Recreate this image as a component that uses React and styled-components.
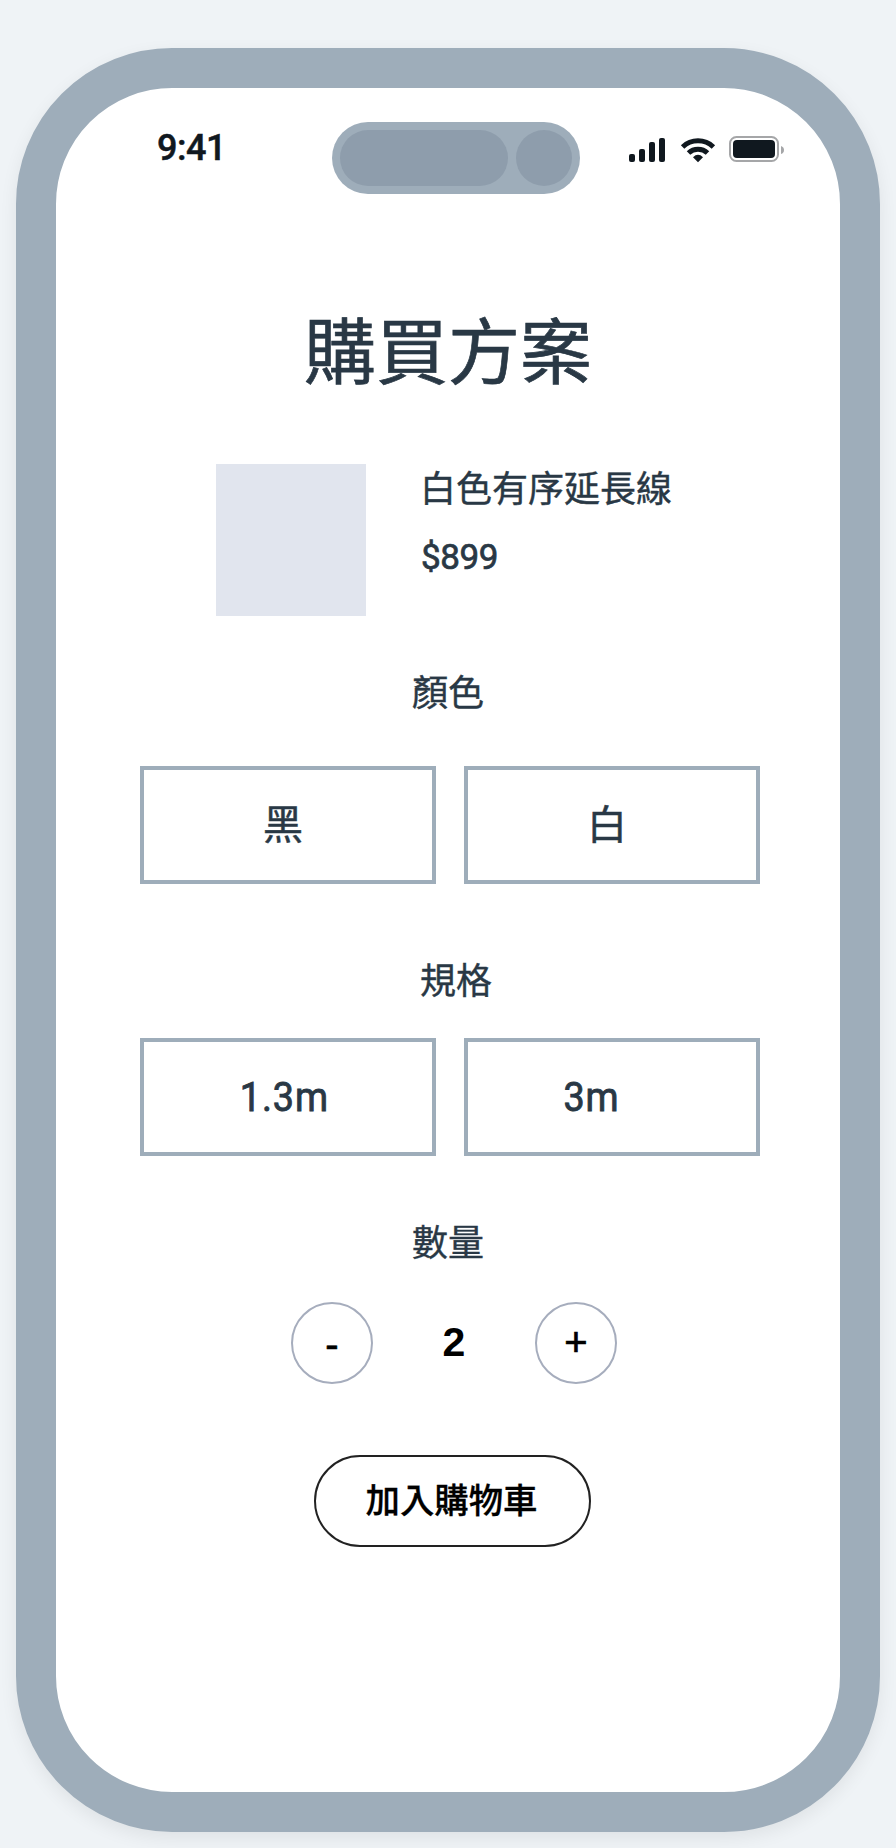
import React, { useState } from "react";
import styled, { createGlobalStyle } from "styled-components";

const GlobalStyle = createGlobalStyle`
  * { box-sizing: border-box; }
  body {
    margin: 0;
    background: #eff3f6;
    color: #293845;
    font-family: "Noto Sans CJK TC", sans-serif;
  }
  button { margin: 0; padding: 0; background: transparent; color: inherit; font-family: inherit; }
`;

const Page = styled.main`
  height: 1848px;
  padding: 48px 16px 16px;
  overflow: hidden;
`;

const Phone = styled.section`
  height: 1784px;
  border: 40px solid #9eadba;
  border-radius: 156px;
  background: #fff;
  box-shadow: 0 6px 18px rgba(0, 0, 0, 0.07);
  display: flex;
  flex-direction: column;
`;

const StatusBar = styled.header`
  display: flex;
  align-items: flex-start;
  height: 106px;
  padding: 34px 54px 0 101px;
`;

const Time = styled.time`
  width: 175px;
  margin-top: 4px;
  font: 500 36px/44px Roboto, sans-serif;
  letter-spacing: -0.5px;
  color: #10181f;
  -webkit-text-stroke: 0.5px #10181f;
`;

const Island = styled.div`
  display: flex;
  gap: 8px;
  width: 248px;
  height: 72px;
  padding: 8px;
  border-radius: 36px;
  background: #9eadba;
`;

const Sensor = styled.span`
  width: ${(p) => p.$width}px;
  height: 56px;
  border-radius: 28px;
  background: #8e9dac;
`;

const StatusIcons = styled.svg`
  width: 156px;
  height: 28px;
  margin: 13px 0 0 49px;
`;

const Title = styled.h1`
  margin: 111px 0 75px;
  text-align: center;
  font-size: 72px;
  font-weight: 400;
  line-height: 84px;
  -webkit-text-stroke: 0.7px #293845;
`;

const Product = styled.article`
  display: flex;
  gap: 54px;
  padding-left: 160px;
`;

const ProductImage = styled.div`
  width: 150px;
  height: 152px;
  background: #e1e5ee;
`;

const ProductInfo = styled.div`
  display: flex;
  flex-direction: column;
  gap: 28px;
`;

const ProductName = styled.h2`
  margin: 0;
  font-size: 36px;
  font-weight: 400;
  line-height: 44px;
  -webkit-text-stroke: 0.4px #293845;
`;

const Price = styled.p`
  margin: 0;
  padding-left: 1px;
  font: 400 35px/44px Roboto, sans-serif;
  letter-spacing: -0.4px;
  -webkit-text-stroke: 0.7px #293845;
`;

const Label = styled.h3`
  margin: ${(p) => p.$top}px 0 ${(p) => p.$bottom}px;
  padding-left: ${(p) => p.$shift || 0}px;
  text-align: center;
  font-size: 36px;
  font-weight: 400;
  line-height: 44px;
  -webkit-text-stroke: 0.4px #293845;
`;

const Options = styled.div`
  display: grid;
  grid-template-columns: 296px 296px;
  gap: 28px;
  padding-left: 84px;
`;

const Option = styled.button`
  height: 118px;
  padding: 0 ${(p) => p.$inset || 0}px ${(p) => p.$lift || 0}px 0;
  border: 4px solid #9eadba;
  font-size: 40px;
  line-height: 48px;
  -webkit-text-stroke: 0.5px #293845;
`;

const Size = styled.span`
  display: inline-block;
  font: 400 41px/48px Roboto, sans-serif;
  letter-spacing: 1px;
  transform: scaleX(0.92);
  -webkit-text-stroke: 0.9px #293845;
`;

const Quantity = styled.div`
  display: flex;
  align-items: center;
  height: 82px;
  padding-left: 235px;
`;

const RoundButton = styled.button`
  width: 82px;
  height: 82px;
  padding-top: ${(p) => p.$drop || 0}px;
  padding-bottom: ${(p) => p.$lift || 0}px;
  border: 2px solid #a6adbd;
  border-radius: 50%;
  color: #000;
  font: 400 ${(p) => p.$size}px/40px "Liberation Sans", sans-serif;
  -webkit-text-stroke: 0.7px #000;
`;

const Count = styled.output`
  width: 162px;
  padding-bottom: 2px;
  text-align: center;
  color: #000;
  font: 700 41px/48px "Liberation Sans", sans-serif;
`;

const CartButton = styled.button`
  width: 277px;
  height: 92px;
  margin: 71px 0 0 258px;
  padding: 0 2px 7px 0;
  border: 2px solid #222;
  border-radius: 46px;
  color: #000;
  font-size: 34.4px;
  font-weight: 500;
  line-height: 44px;
  -webkit-text-stroke: 0.3px #000;
`;

function DeviceStatus() {
  return (
    <StatusIcons viewBox="0 0 156 28" fill="#10181f">
      <rect x="0" y="19" width="6" height="8" rx="2" />
      <rect x="10" y="14" width="6" height="13" rx="2" />
      <rect x="20" y="7" width="6" height="20" rx="2" />
      <rect x="30" y="3" width="6" height="24" rx="2" />
      <g fill="none" stroke="#10181f" strokeWidth="5">
        <path d="M53.6 12 A22.4 22.4 0 0 1 84.4 12" />
        <path d="M59.5 18 A13.8 13.8 0 0 1 78.5 18" />
      </g>
      <path d="M64 22.2 Q69 17.4 74 22.2 L69 27.2 Z" />
      <rect x="101" y="2" width="48" height="24" rx="6.5" fill="none" stroke="#a5a6a8" strokeWidth="2" />
      <rect x="104" y="5" width="42" height="18" rx="4" />
      <path d="M152 11 Q155 12 155 15 Q155 18 152 19 Z" fill="#a5a6a8" />
    </StatusIcons>
  );
}

export default function App() {
  const [count, setCount] = useState(2);
  return (
    <>
      <GlobalStyle />
      <Page>
        <Phone>
          <StatusBar>
            <Time>9:41</Time>
            <Island>
              <Sensor $width={168} />
              <Sensor $width={56} />
            </Island>
            <DeviceStatus />
          </StatusBar>
          <Title>購買方案</Title>
          <Product>
            <ProductImage />
            <ProductInfo>
              <ProductName>白色有序延長線</ProductName>
              <Price>$899</Price>
            </ProductInfo>
          </Product>
          <Label $top={52} $bottom={54}>顏色</Label>
          <Options>
            <Option $inset={10} $lift={6}>黑</Option>
            <Option $inset={10} $lift={6}>白</Option>
          </Options>
          <Label $top={72} $bottom={38} $shift={16}>規格</Label>
          <Options>
            <Option $inset={8} $lift={3}><Size>1.3m</Size></Option>
            <Option $inset={42} $lift={3}><Size>3m</Size></Option>
          </Options>
          <Label $top={62} $bottom={40}>數量</Label>
          <Quantity>
            <RoundButton $size={40} $drop={2} onClick={() => setCount(Math.max(1, count - 1))}>-</RoundButton>
            <Count>{count}</Count>
            <RoundButton $size={40} $lift={2} onClick={() => setCount(count + 1)}>+</RoundButton>
          </Quantity>
          <CartButton>加入購物車</CartButton>
        </Phone>
      </Page>
    </>
  );
}
